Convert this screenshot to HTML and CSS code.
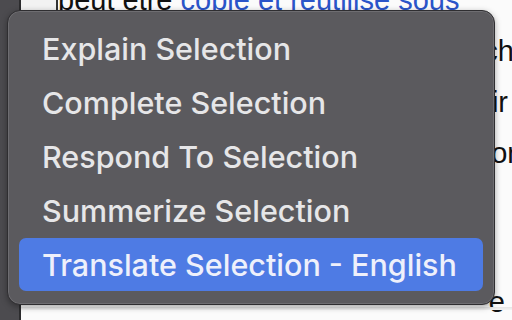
FILE: index.html
```html
<!DOCTYPE html>
<html lang="fr">
<head>
<meta charset="utf-8">
<title>Context menu</title>
<link rel="stylesheet" href="styles.css">
</head>
<body>
<div class="screen">
  <div class="sidebar"></div>
  <div class="page">
    <div class="topcell"></div>
    <div class="doc">
      <p class="para">
        <span class="line first"><span class="dark">peut être </span><a class="link">copié et réutilisé sous</a></span>
        <span class="line end l2">générer ou enrichir la tâche</span>
        <span class="line end l3">automatiquement pour obtenir</span>
        <span class="line end l4">disponible sur un autre serveur or</span>
        <span class="line end l5">texte</span>
      </p>
      <p class="para second">
        <span class="line end l6">e</span>
      </p>
    </div>
    <div class="rule"></div>
  </div>
</div>
<div class="menu">
  <div class="item">Explain Selection</div>
  <div class="item">Complete Selection</div>
  <div class="item">Respond To Selection</div>
  <div class="item">Summerize Selection</div>
  <div class="item active">Translate Selection - English</div>
</div>
</body>
</html>
```
FILE: styles.css
```css
html, body {
  margin: 0;
  padding: 0;
}
body {
  width: 512px;
  height: 320px;
  overflow: hidden;
  position: relative;
  background: #ffffff;
  font-family: "Liberation Sans", Arial, sans-serif;
}
.screen {
  display: flex;
  height: 320px;
}
.sidebar {
  width: 19px;
  background: #4c4b4f;
  border-right: 2px solid #2c2c2e;
  flex: none;
}
.page {
  flex: 1;
  position: relative;
  overflow: hidden;
  background: #fbfbfb;
}
.topcell {
  position: absolute;
  left: 0;
  top: 0;
  width: 35px;
  height: 10px;
  background: #f2f2f2;
  border-right: 2px solid #333;
}
.rule {
  position: absolute;
  left: 0;
  right: 0;
  top: 307px;
  height: 3px;
  background: linear-gradient(#e4e4e4, #f4f4f4);
}
.doc {
  width: 1000px;
  font-size: 29px;
  color: #111;
}
.para {
  margin: -25px 0 0 0;
  display: flex;
  flex-direction: column;
  line-height: 51px;
}
.para.second {
  margin-top: 47px;
}
.line {
  display: block;
  white-space: nowrap;
}
.line.first {
  padding-left: 37px;
}
.line.end {
  text-align: right;
}
.l2 { width: 509px; }
.l3 { width: 487px; }
.l4 { width: 496px; }
.l5 { width: 200px; }
.l6 { width: 484px; }
.link {
  color: #2a55c9;
}
.menu {
  position: absolute;
  left: 7px;
  top: 10px;
  width: 464px;
  height: 271px;
  padding: 11px;
  background: #5b5a5e;
  border: 1px solid #2f2e31;
  border-radius: 13px;
  box-shadow: inset 0 0 0 1px #6e6d71, 0 2px 6px rgba(0,0,0,0.35);
  display: flex;
  flex-direction: column;
  font-family: Inter, "Noto Sans", sans-serif;
}
.item {
  height: 54px;
  line-height: 54px;
  padding-left: 23px;
  font-size: 30.5px;
  font-weight: 500;
  color: #e6e6e8;
  border-radius: 7px;
  white-space: nowrap;
}
.item.active {
  height: 53px;
  line-height: 53px;
  background: #4e7be4;
  color: #eef0fb;
}
```
